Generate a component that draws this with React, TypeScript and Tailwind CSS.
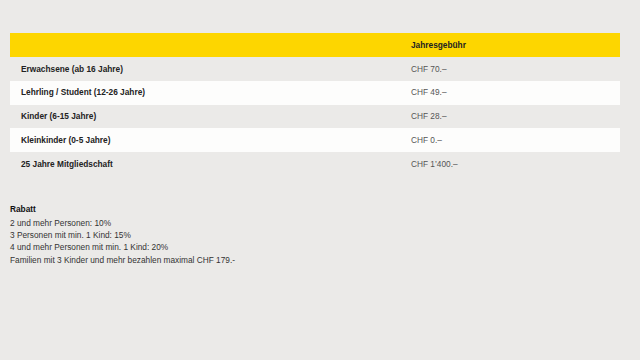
import React from "react";

const rows = [
  { label: "Erwachsene (ab 16 Jahre)", price: "CHF 70.–" },
  { label: "Lehrling / Student (12-26 Jahre)", price: "CHF 49.–" },
  { label: "Kinder (6-15 Jahre)", price: "CHF 28.–" },
  { label: "Kleinkinder (0-5 Jahre)", price: "CHF 0.–" },
  { label: "25 Jahre Mitgliedschaft", price: "CHF 1’400.–" },
];

const discounts = [
  "2 und mehr Personen: 10%",
  "3 Personen mit min. 1 Kind: 15%",
  "4 und mehr Personen mit min. 1 Kind: 20%",
  "Familien mit 3 Kinder und mehr bezahlen maximal CHF 179.-",
];

export default function App() {
  return (
    <div
      className="w-[640px] h-[360px] bg-[#ebeae8] overflow-hidden"
      style={{ fontFamily: '"Liberation Sans", Arial, sans-serif' }}
    >
      <div className="pt-[33px] ml-[10px] w-[610px]">
        <div className="grid grid-cols-[390px_1fr] h-[24px] items-center bg-[#fdd600]">
          <div />
          <div className="pl-[11px] text-[8.3px] font-bold text-[#222]">Jahresgebühr</div>
        </div>
        {rows.map((r, i) => (
          <div
            key={r.label}
            className={
              "grid grid-cols-[390px_1fr] h-[23.8px] items-center " +
              (i % 2 === 1 ? "bg-[#fdfdfc]" : "bg-[#ebeae8]")
            }
          >
            <div className="pl-[11px] text-[8.3px] font-bold text-[#222]">{r.label}</div>
            <div className="pl-[11px] text-[8.3px] text-[#555]">{r.price}</div>
          </div>
        ))}
      </div>
      <div className="mt-[27px] px-[10px] text-[8.3px] leading-[12.3px] text-[#333]">
        <div className="font-bold text-[#111] mb-[1.5px]">Rabatt</div>
        {discounts.map((d) => (
          <div key={d}>{d}</div>
        ))}
      </div>
    </div>
  );
}
